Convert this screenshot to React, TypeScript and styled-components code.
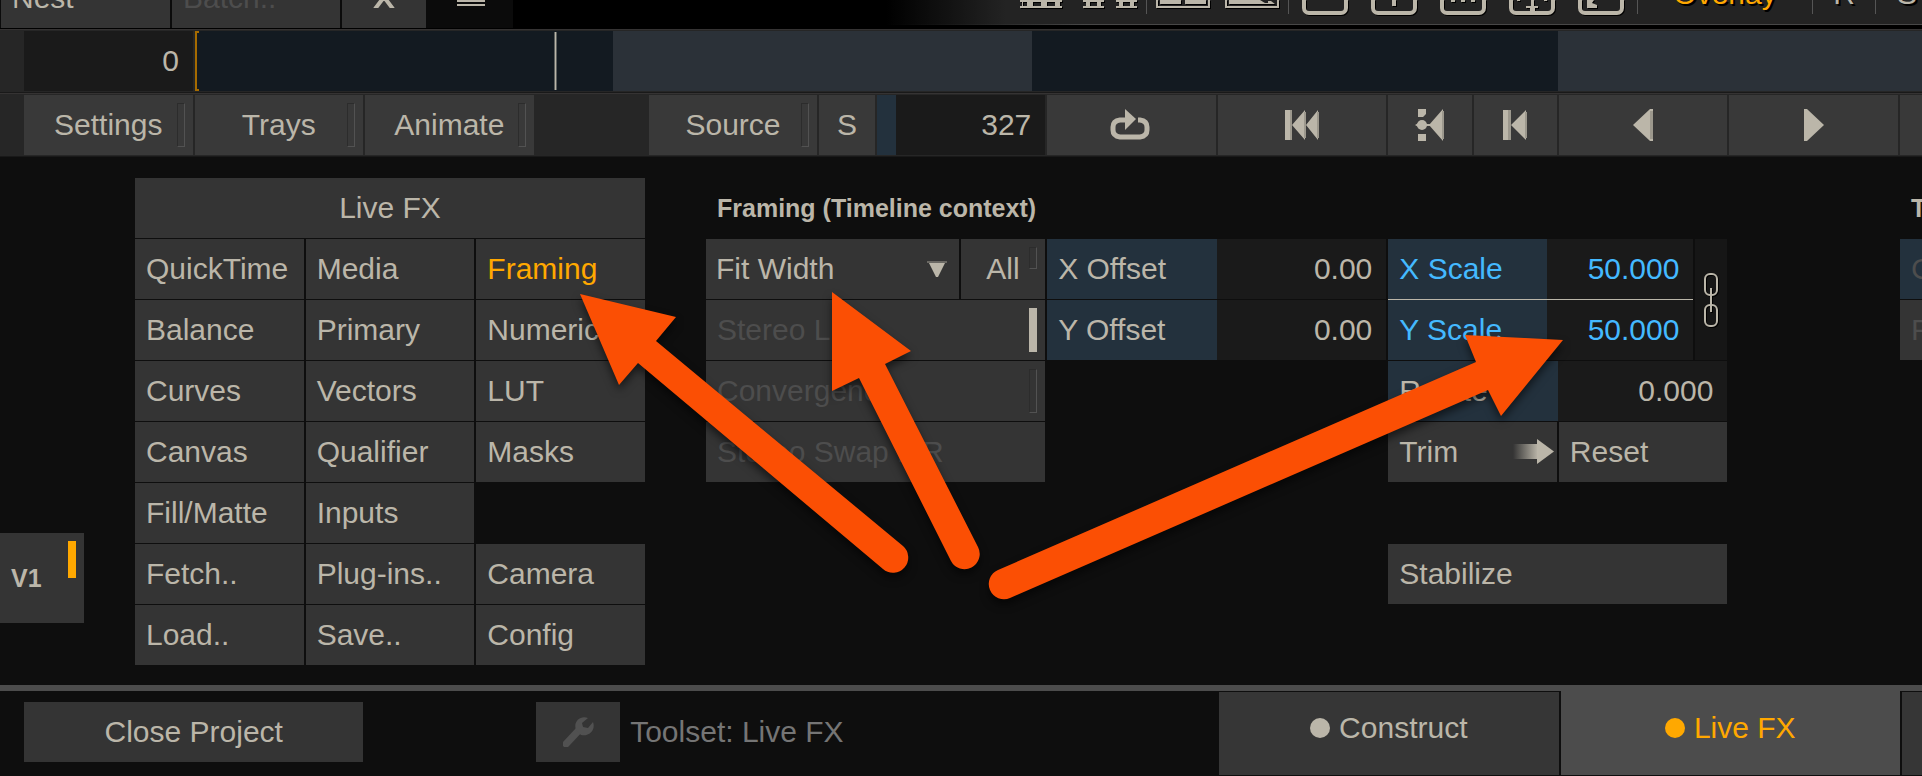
import React from "react";
import styled, { createGlobalStyle, css } from "styled-components";

const color = {
  ink: "#bbb6a9",
  faint: "#4d4d4d",
  muted: "#757575",
  accent: "#ffa800",
  edited: "#44b9ff",
  base: "#0e0e0e",
  strip: "#262626",
  button: "#343434",
  raised: "#393939",
  field: "#1a1a1a",
  fieldLabel: "#23313d",
  rule: "#4c4c4c",
  callout: "#fb4f04",
};

const GlobalStyle = createGlobalStyle`
  *, *::before, *::after { box-sizing: border-box; }
  body {
    margin: 0;
    background: ${color.base};
    color: ${color.ink};
    font: 30px/60px "Liberation Sans", Arial, sans-serif;
  }
  button, input, select { font: inherit; color: inherit; border: 0; border-radius: 0; margin: 0; padding: 0; }
  button { cursor: pointer; }
  button:disabled { cursor: default; }
  svg { display: block; flex: none; }
`;

const Page = styled.div`
  position: relative;
  overflow: hidden;
`;

/* ---------- shared parts ---------- */

type ButtonProps = {
  $center?: boolean;
  $raised?: boolean;
  $active?: boolean;
  $label?: boolean;
  $span?: number;
  $col?: number;
  $row?: number;
};

const Button = styled.button<ButtonProps>`
  position: relative;
  display: flex;
  align-items: center;
  justify-content: ${(p) => (p.$center ? "center" : "flex-start")};
  min-width: 0;
  height: 60px;
  padding: 0 ${(p) => (p.$center ? 0 : 11)}px;
  overflow: hidden;
  white-space: nowrap;
  line-height: 60px;
  background: ${(p) => (p.$label ? color.fieldLabel : p.$raised ? color.raised : color.button)};
  color: ${(p) => (p.$active ? color.accent : color.ink)};
  ${(p) => p.$col && css`grid-column: ${p.$col} / span ${p.$span ?? 1};`}
  ${(p) => !p.$col && p.$span && css`grid-column: span ${p.$span};`}
  ${(p) => p.$row && css`grid-row: ${p.$row};`}
  &:disabled { color: ${color.faint}; }
`;

const Lamp = styled.span<{ $size?: "short" | "track"; $on?: string }>`
  position: absolute;
  top: 8px;
  right: 8px;
  width: 8px;
  height: ${(p) => (p.$size === "short" ? 22 : p.$size === "track" ? 37 : 44)}px;
  border: 1px solid #2c2c2c;
  border-right-color: #525252;
  border-bottom-color: #525252;
  ${(p) => p.$on && css`background: ${p.$on}; border-color: ${p.$on};`}
`;

const ModuleGrid = styled.div<{ $columns: number }>`
  display: grid;
  grid-template-columns: repeat(${(p) => p.$columns}, minmax(0, 1fr)) 22px;
  column-gap: 2px;
`;

const NumberInput = styled.input`
  flex: 1;
  min-width: 0;
  width: 0;
  height: 60px;
  padding: 0 14px;
  text-align: right;
  background: ${color.field};
  outline: none;
`;

/* ---------- top bar ---------- */

const TopBar = styled.header`
  display: flex;
  justify-content: space-between;
  align-items: flex-end;
  height: 29px;
  padding-bottom: 1px;
  overflow: hidden;
  background: #000;
`;

const Menus = styled.nav`
  display: flex;
  flex: none;
  align-items: flex-end;
  gap: 2px;
  height: 28px;
  padding-left: 1px;
  background: #0b0b0b;
`;

const MenuButton = styled(Button)<{ $width: number }>`
  flex: none;
  width: ${(p) => p.$width}px;
`;

const MenuIcon = styled(MenuButton)`
  background: transparent;
`;

const ViewTools = styled.div`
  display: flex;
  flex: 0 1 1036px;
  align-items: flex-end;
  height: 25px;
  margin-bottom: 3px;
  padding-left: 134px;
  overflow: hidden;
  border-bottom: 1px solid #454545;
  border-image: linear-gradient(90deg, #000, #484848 200px) 1;
  background: linear-gradient(90deg, #000, #232323 120px);
`;

const ToolGroup = styled.div<{ $gap: number; $before: number; $after: number }>`
  display: flex;
  flex: none;
  gap: ${(p) => p.$gap}px;
  padding: 0 ${(p) => p.$after}px 0 ${(p) => p.$before}px;
`;

const ToolIcon = styled.button`
  flex: none;
  background: none;
  color: ${color.ink};
  filter: drop-shadow(1px 1px 0 #000);
`;

const Divider = styled.span`
  flex: none;
  align-self: flex-start;
  width: 1px;
  height: 14px;
  background: #555;
`;

const ToolText = styled.button<{ $active?: boolean }>`
  flex: none;
  width: ${(p) => (p.$active ? 174 : 62)}px;
  height: 60px;
  background: none;
  line-height: 60px;
  color: ${(p) => (p.$active ? color.accent : color.ink)};
  text-shadow: 2px 2px 0 #000;
`;

const FrameTool = ({ label, children }: { label: string; children?: React.ReactNode }) => (
  <ToolIcon aria-label={label}>
    <svg width="46" height="24" viewBox="0 0 46 24" fill="currentColor">
      <rect x="2" y="-29" width="42" height="42" rx="5" fill="none" stroke="currentColor" strokeWidth="4" />
      {children}
    </svg>
  </ToolIcon>
);

/* ---------- timeline and transport ---------- */

const Strip = styled.div`
  padding: 1px 0 1px 24px;
  border-top: 1px solid #353333;
  border-bottom: 1px solid #191919;
  background: ${color.strip};
`;

const TimelineStrip = styled(Strip)`
  display: flex;
  gap: 2px;
`;

const StartFrame = styled.div`
  display: flex;
  width: 169px;
  flex: none;
`;

const Timeline = styled.div`
  position: relative;
  display: flex;
  flex: 1;
  height: 60px;
`;

const Shot = styled.div<{ $frames: number; $light?: boolean }>`
  flex: ${(p) => p.$frames} 1 0;
  background: ${(p) => (p.$light ? "#2b3138" : "#131a21")};
`;

const InPoint = styled.span`
  position: absolute;
  left: 0;
  top: 0;
  width: 4px;
  height: 60px;
  border: 2px solid #a66b00;
  border-right: 0;
`;

const Playhead = styled.span`
  position: absolute;
  left: 20.8%;
  top: 1px;
  width: 3px;
  height: 58px;
  border: solid #5e615f;
  border-width: 0 1px;
  background: ${color.ink};
`;

const SourceGroup = styled.div`
  grid-column: span 3;
  display: flex;
  justify-content: flex-end;
  gap: 2px;
`;

const SourceButton = styled(Button)`
  flex: 0 0 33%;
`;

const SoloButton = styled(Button)`
  flex: 0 0 56px;
`;

const FrameField = styled.div`
  display: flex;
  flex: 0 0 33%;
  border-left: 19px solid ${color.fieldLabel};
`;

const Pair = styled.div`
  display: grid;
  grid-template-columns: 1fr 1fr;
  gap: 2px;
`;

/* ---------- workspace ---------- */

const Workspace = styled.main`
  display: flex;
  padding: 21px 0 20px;
`;

const Tracks = styled.aside`
  display: flex;
  flex: 0 0 135px;
  flex-direction: column;
  justify-content: flex-end;
  padding-bottom: 42px;
`;

const TrackButton = styled(Button)`
  width: 84px;
  height: 90px;
  font-size: 25px;
  font-weight: bold;
`;

const ToolPanel = styled.section`
  display: grid;
  flex: 3 1 0;
  grid-template-columns: repeat(3, minmax(0, 1fr));
  grid-auto-rows: 60px;
  gap: 1px 2px;
  margin-right: 61px;
`;

const SettingsPanel = styled.section`
  display: grid;
  flex: 7 1 26px;
  grid-template-columns: repeat(7, minmax(0, 1fr)) 22px;
  grid-auto-rows: 60px;
  gap: 1px 2px;
`;

const Title = styled.h2<{ $col: number; $span: number }>`
  grid-column: ${(p) => p.$col} / span ${(p) => p.$span};
  grid-row: 1;
  margin: 0;
  padding-left: 11px;
  overflow: hidden;
  white-space: nowrap;
  font-size: 25px;
`;

const FitRow = styled.div`
  grid-column: 1 / span 2;
  grid-row: 2;
  display: grid;
  grid-template-columns: 3fr 1fr;
  gap: 2px;
`;

const SelectBox = styled.div`
  position: relative;
  background: ${color.button};
  svg { position: absolute; right: 12px; top: 22px; pointer-events: none; }
`;

const Select = styled.select`
  appearance: none;
  width: 100%;
  height: 60px;
  padding: 0 40px 0 10px;
  background: transparent;
  line-height: 60px;
  outline: none;
`;

const Param = styled.div<{ $col?: number; $row?: number; $edited?: boolean }>`
  display: flex;
  min-width: 0;
  color: ${(p) => (p.$edited ? color.edited : color.ink)};
  ${(p) => p.$col && css`grid-column: ${p.$col} / span 2; grid-row: ${p.$row};`}
`;

const ParamLabel = styled.label<{ $wide?: boolean }>`
  flex: 0 0 ${(p) => (p.$wide ? 52 : 50)}%;
  padding-left: 11px;
  overflow: hidden;
  white-space: nowrap;
  background: ${color.fieldLabel};
`;

const ScaleBlock = styled.div`
  grid-column: 5 / span 2;
  grid-row: 2 / span 2;
  display: grid;
  grid-template-columns: minmax(0, 1fr) 32px;
  gap: 2px;
`;

const LinkedFields = styled.div`
  display: flex;
  flex-direction: column;
  gap: 1px;
  background: ${color.ink};
`;

const LinkButton = styled.button`
  display: flex;
  align-items: center;
  justify-content: center;
  background: #161616;
`;

const TrimButton = styled(Button)`
  justify-content: space-between;
  padding-right: 3px;
`;

/* ---------- footer ---------- */

const Footer = styled.footer`
  padding-left: 24px;
  border-top: 6px solid ${color.rule};
`;

const FooterGrid = styled(ModuleGrid)`
  grid-template-columns: repeat(11, minmax(0, 1fr)) 20px;
  height: 85px;
`;

const FooterButton = styled(Button)`
  margin-top: 11px;
`;

const Toolset = styled.div`
  grid-column: 4 / span 3;
  display: flex;
  align-items: flex-start;
  gap: 10px;
  white-space: nowrap;
  color: ${color.muted};
`;

const WrenchButton = styled(FooterButton)`
  width: 84px;
  flex: none;
`;

const ToolsetName = styled.span`
  margin-top: 11px;
`;

const Tab = styled.button<{ $active?: boolean; $col: number; $span: number }>`
  grid-column: ${(p) => p.$col} / span ${(p) => p.$span};
  display: flex;
  align-items: center;
  justify-content: center;
  gap: 9px;
  height: ${(p) => (p.$active ? 84 : 83)}px;
  margin-top: ${(p) => (p.$active ? 0 : 1)}px;
  padding-bottom: 11px;
  background: ${(p) => (p.$active ? color.rule : "#363636")};
  color: ${(p) => (p.$active ? color.accent : color.ink)};
`;

const Dot = styled.span`
  width: 20px;
  height: 20px;
  border-radius: 50%;
  background: currentColor;
`;

const Callouts = styled.svg`
  position: absolute;
  top: 0;
  left: 0;
  pointer-events: none;
  filter: drop-shadow(0 5px 4px rgba(0, 0, 0, 0.55));
`;

/* ---------- data ---------- */

type Cell = { name: string; col: number; row: number };

const toolRows: string[][] = [
  ["QuickTime", "Media", "Framing"],
  ["Balance", "Primary", "Numeric"],
  ["Curves", "Vectors", "LUT"],
  ["Canvas", "Qualifier", "Masks"],
  ["Fill/Matte", "Inputs"],
  ["Fetch..", "Plug-ins..", "Camera"],
  ["Load..", "Save..", "Config"],
];

const toolCells: Cell[] = toolRows.flatMap((names, r) =>
  names.map((name, c) => ({ name, col: c + 1, row: r + 2 }))
);

const NumberParam = (props: {
  id: string;
  label: string;
  value: string;
  col?: number;
  row?: number;
  edited?: boolean;
}) => (
  <Param $col={props.col} $row={props.row} $edited={props.edited}>
    <ParamLabel htmlFor={props.id} $wide={props.edited}>{props.label}</ParamLabel>
    <NumberInput id={props.id} defaultValue={props.value} />
  </Param>
);

export default function App() {
  return (
    <Page>
      <GlobalStyle />

      <TopBar>
        <Menus>
          <MenuButton $width={169}>Nest</MenuButton>
          <MenuButton $width={168} disabled>Batch..</MenuButton>
          <MenuButton $width={84} $center aria-label="Close">
            <svg width="24" height="20" viewBox="0 0 24 20" stroke={color.ink} strokeWidth="4" fill="none">
              <path d="M3 -3 L21 21 M21 -3 L3 21" />
            </svg>
          </MenuButton>
          <MenuIcon $width={85} $center aria-label="Menu">
            <svg width="28" height="20" viewBox="0 0 28 20" fill={color.ink}>
              <path d="M0 8h28v2H0zM0 12h28v2H0zM0 16h28v2H0z" />
            </svg>
          </MenuIcon>
        </Menus>
        <ViewTools>
          <ToolGroup $gap={21} $before={0} $after={9}>
            <ToolIcon aria-label="Grid">
              <svg width="42" height="24" viewBox="0 0 42 24" fill="currentColor">
                <path d="M0 0h42v2H0zM0 6h42v2H0zM7 0h6v8H7zM21 0h6v8h-6zM35 0h5v8h-5zM2 0h1v8H2z" />
              </svg>
            </ToolIcon>
            <ToolIcon aria-label="Split grid">
              <svg width="54" height="24" viewBox="0 0 54 24" fill="currentColor">
                <path d="M0 0h21v2H0zM0 6h21v2H0zM3 0h4v8H3zM14 0h4v8h-4z" />
                <path d="M33 0h21v2H33zM33 6h21v2H33zM36 0h4v8h-4zM47 0h4v8h-4z" />
              </svg>
            </ToolIcon>
          </ToolGroup>
          <Divider />
          <ToolGroup $gap={15} $before={9} $after={9}>
            <ToolIcon aria-label="Dual view">
              <svg width="54" height="24" viewBox="0 0 54 24" fill="currentColor">
                <path d="M0 0h2v6h50V0h2v8H0zM4 0h21v4H4zM29 0h21v4H29z" />
              </svg>
            </ToolIcon>
            <ToolIcon aria-label="Wipe view">
              <svg width="54" height="24" viewBox="0 0 54 24" fill="currentColor">
                <path d="M0 0h2v6h50V0h2v8H0zM4 0h31l5 3h3V1h3l4 3H4z" />
              </svg>
            </ToolIcon>
          </ToolGroup>
          <Divider />
          <ToolGroup $gap={23} $before={13} $after={13}>
            <FrameTool label="Frame" />
            <FrameTool label="Single"><path d="M21 0h4v6h-4z" /></FrameTool>
            <FrameTool label="More"><path d="M11 0h4v2h-4zM21 0h4v2h-4zM31 0h4v2h-4z" /></FrameTool>
            <FrameTool label="Fit height"><path d="M22 0h3v6h4v2h-3v3h-5V8h-4V6h5zM8 0h3v1H8zM35 0h3v1h-3z" /></FrameTool>
            <FrameTool label="Expand"><path d="M9 0h7l-2 3 5 2v3H9z" /></FrameTool>
          </ToolGroup>
          <Divider />
          <ToolText $active>Overlay</ToolText>
          <Divider />
          <ToolText>R</ToolText>
          <Divider />
          <ToolText>S</ToolText>
        </ViewTools>
      </TopBar>

      <TimelineStrip>
        <StartFrame>
          <NumberInput aria-label="Start frame" defaultValue="0" />
        </StartFrame>
        <Timeline>
          <Shot $frames={418} />
          <Shot $frames={419} $light />
          <Shot $frames={526} />
          <Shot $frames={364} $light />
          <InPoint />
          <Playhead />
        </Timeline>
      </TimelineStrip>

      <Strip>
        <ModuleGrid $columns={11}>
          <Button $raised $center>Settings<Lamp /></Button>
          <Button $raised $center>Trays<Lamp /></Button>
          <Button $raised $center>Animate<Lamp /></Button>
          <SourceGroup>
            <SourceButton $raised $center>Source<Lamp /></SourceButton>
            <SoloButton $raised $center>S</SoloButton>
            <FrameField>
              <NumberInput aria-label="Current frame" defaultValue="327" />
            </FrameField>
          </SourceGroup>
          <Button $raised $center aria-label="Loop">
            <svg width="44" height="32" viewBox="0 0 44 32">
              <path d="M17 11 H10 Q3 12 3 18 V21 Q3 27 10 28 H30 Q37 27 37 21 V18 Q37 12 30 11 H28" fill="none" stroke={color.ink} strokeWidth="5" />
              <path d="M15 0 L26 10 L15 21z" fill={color.ink} />
            </svg>
          </Button>
          <Button $raised $center aria-label="Go to start">
            <svg width="34" height="30" viewBox="0 0 34 30" fill={color.ink}>
              <path d="M0 0h6v30H0zM20 0v30L7 15zM33 0v30L21 15z" />
              <path d="M5 0h2v30H5zM19 2h2v26h-2zM32 2h2v26h-2z" fill="#9c988d" />
            </svg>
          </Button>
          <Pair>
            <Button $raised $center aria-label="Previous key">
              <svg width="29" height="32" viewBox="0 0 29 32" fill={color.ink}>
                <path d="M3 0h8v5l-3 3H3zM3 25h8v7H3zM28 0v32L14 16z" />
                <circle cx="7" cy="16" r="5" />
                <path d="M0 16l5-3v6zM10 15h5v2h-5z" />
                <path d="M27 2h2v28h-2z" fill="#9c988d" />
              </svg>
            </Button>
            <Button $raised $center aria-label="Previous cut">
              <svg width="24" height="30" viewBox="0 0 24 30" fill={color.ink}>
                <path d="M0 0h6v30H0zM23 0v30L8 15z" />
                <path d="M5 0h3v30H5zM22 2h2v26h-2z" fill="#9c988d" />
              </svg>
            </Button>
          </Pair>
          <Button $raised $center aria-label="Play backward">
            <svg width="20" height="32" viewBox="0 0 20 32" fill={color.ink}>
              <path d="M20 0v32h-3L0 16 17 0z" />
              <path d="M17 2h3v28h-3z" fill="#9c988d" />
            </svg>
          </Button>
          <Button $raised $center aria-label="Play forward">
            <svg width="20" height="32" viewBox="0 0 20 32" fill={color.ink}>
              <path d="M0 0h3l17 16L3 32H0z" />
            </svg>
          </Button>
          <Button $raised aria-label="Next cut" />
        </ModuleGrid>
      </Strip>

      <Workspace>
        <Tracks>
          <TrackButton>V1<Lamp $size="track" $on={color.accent} /></TrackButton>
        </Tracks>

        <ToolPanel>
          <Button $center $col={1} $span={3} $row={1}>Live FX</Button>
          {toolCells.map((cell) => (
            <Button key={cell.name} $col={cell.col} $row={cell.row} $active={cell.name === "Framing"}>
              {cell.name}
            </Button>
          ))}
        </ToolPanel>

        <SettingsPanel>
          <Title $col={1} $span={4}>Framing (Timeline context)</Title>
          <FitRow>
            <SelectBox>
              <Select aria-label="Fit mode" defaultValue="Fit Width">
                <option>Fit Width</option>
              </Select>
              <svg width="20" height="17" viewBox="0 0 20 17" fill={color.ink}>
                <path d="M0 0h20v2H0z" opacity="0.4" />
                <path d="M2 2h16l-7 14H9z" />
              </svg>
            </SelectBox>
            <Button $center>All<Lamp $size="short" /></Button>
          </FitRow>
          <Button disabled $col={1} $span={2} $row={3}>Stereo Link<Lamp $on={color.ink} /></Button>
          <Button disabled $col={1} $span={2} $row={4}>Convergence<Lamp /></Button>
          <Button disabled $col={1} $span={2} $row={5}>Stereo Swap L/R</Button>

          <NumberParam id="x-offset" label="X Offset" value="0.00" col={3} row={2} />
          <NumberParam id="y-offset" label="Y Offset" value="0.00" col={3} row={3} />

          <ScaleBlock>
            <LinkedFields>
              <NumberParam id="x-scale" label="X Scale" value="50.000" edited />
              <NumberParam id="y-scale" label="Y Scale" value="50.000" edited />
            </LinkedFields>
            <LinkButton aria-label="Link scales">
              <svg width="18" height="56" viewBox="0 0 18 56" fill="none" strokeWidth="2">
                <g stroke="#000" transform="translate(1 1)">
                  <rect x="3" y="2" width="12" height="21" rx="5" />
                  <rect x="3" y="33" width="12" height="21" rx="5" />
                  <path d="M9 16v24" />
                </g>
                <g stroke={color.ink}>
                  <rect x="3" y="2" width="12" height="21" rx="5" />
                  <rect x="3" y="33" width="12" height="21" rx="5" />
                  <path d="M9 16v24" />
                </g>
              </svg>
            </LinkButton>
          </ScaleBlock>
          <NumberParam id="rotate" label="Rotate" value="0.000" col={5} row={4} />
          <TrimButton $col={5} $row={5}>
            Trim
            <svg width="41" height="26" viewBox="0 0 41 26">
              <defs>
                <linearGradient id="trim-tail">
                  <stop offset="0" stopColor={color.ink} stopOpacity="0" />
                  <stop offset="1" stopColor={color.ink} />
                </linearGradient>
              </defs>
              <path d="M0 5h25v15H0z" fill="url(#trim-tail)" />
              <path d="M24 0l17 12.500L24 25z" fill={color.ink} />
            </svg>
          </TrimButton>
          <Button $col={6} $row={5}>Reset</Button>
          <Button $col={5} $span={2} $row={7}>Stabilize</Button>

          <Title $col={8} $span={1}>T</Title>
          <Button disabled $label $col={8} $row={2}>C</Button>
          <Button disabled $col={8} $row={3}>F</Button>
        </SettingsPanel>
      </Workspace>

      <Footer>
        <FooterGrid $columns={11}>
          <FooterButton $center $col={1} $span={2}>Close Project</FooterButton>
          <Toolset>
            <WrenchButton $center aria-label="Edit toolset">
              <svg width="31" height="30" viewBox="0 0 31 30">
                <path d="M3 27 L17 12" stroke="#515151" strokeWidth="7" strokeLinecap="round" />
                <path d="M25 1 C17 -2 10 5 13 13 L18 18 C26 20 33 13 30 5 L25 11 L20 10 L19 6z" fill="#515151" />
              </svg>
            </WrenchButton>
            <ToolsetName>Toolset: Live FX</ToolsetName>
          </Toolset>
          <Tab $col={8} $span={2}><Dot />Construct</Tab>
          <Tab $col={10} $span={2} $active><Dot />Live FX</Tab>
          <Tab $col={12} $span={1} aria-label="Next workspace" />
        </FooterGrid>
      </Footer>

      <Callouts width="1922" height="776" viewBox="0 0 1922 776" fill={color.callout} aria-hidden="true">
        <path d="M580 294 L676 317 L656 341 L903 546 A15 15 0 0 1 883 569 L638 363 L619 385z" />
        <path d="M832 292 L911 351 L885 364 L978 547 A15 15 0 0 1 951 561 L859 378 L832 391z" />
        <path d="M1563 340 L1465 335 L1476 362 L998 570 A15 15 0 0 0 1010 598 L1488 390 L1501 416z" />
      </Callouts>
    </Page>
  );
}
